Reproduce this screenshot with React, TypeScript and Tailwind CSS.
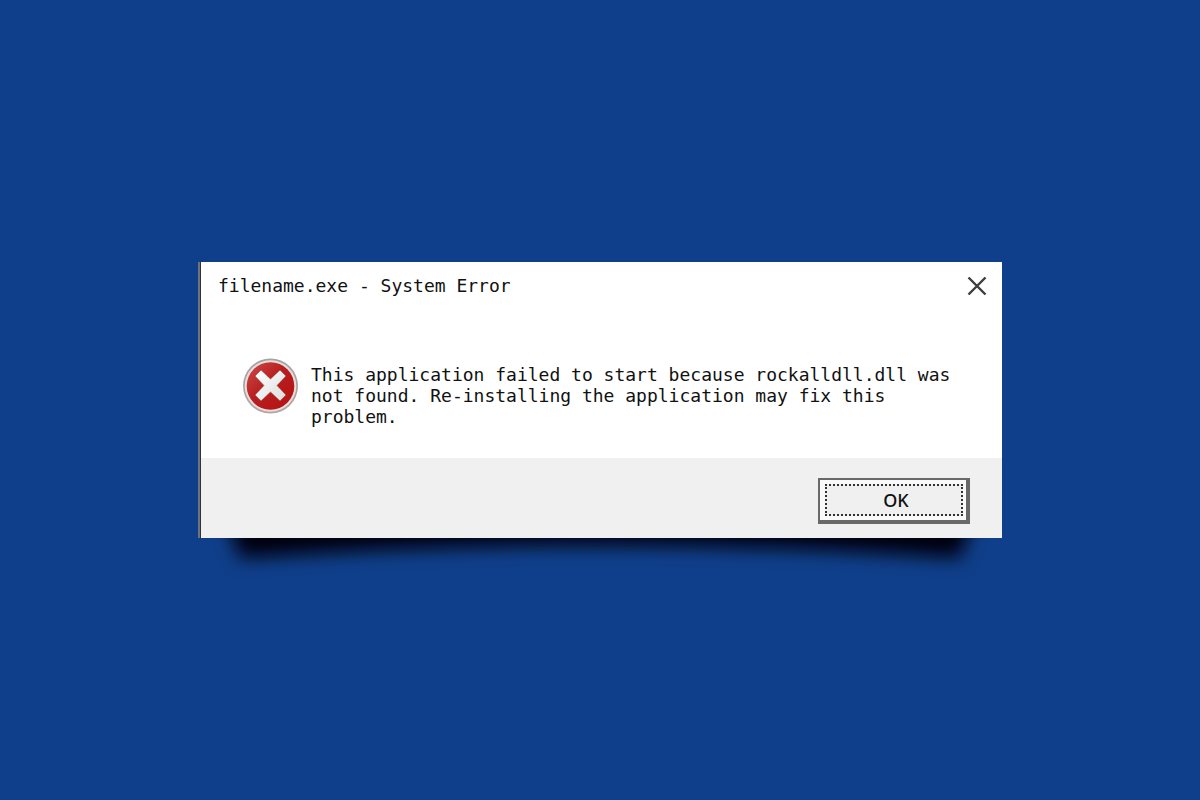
import { useState } from "react";

const ErrorIcon = () => (
  <svg viewBox="0 0 56 56" className="w-14 h-14 shrink-0" aria-hidden="true">
    <defs>
      <linearGradient id="rim" x1="0" y1="0" x2="0" y2="1">
        <stop offset="0" stopColor="#a3a3a3" />
        <stop offset="1" stopColor="#b0a6a6" />
      </linearGradient>
      <linearGradient id="red" x1="0" y1="0" x2="1" y2="1">
        <stop offset="0" stopColor="#cf4a48" />
        <stop offset="0.45" stopColor="#b81f20" />
        <stop offset="1" stopColor="#b5100f" />
      </linearGradient>
      <linearGradient id="cross" x1="0" y1="0" x2="1" y2="1">
        <stop offset="0" stopColor="#ffffff" />
        <stop offset="1" stopColor="#dcdcdc" />
      </linearGradient>
    </defs>
    <circle cx="27.5" cy="28" r="27.5" fill="url(#rim)" />
    <circle cx="27.5" cy="28" r="25.8" fill="#eadedd" />
    <circle cx="27.5" cy="28" r="23.8" fill="url(#red)" />
    <path
      d="M18 12 L27.5 21 L37 12 L43 18 L34 27.5 L43 37 L37 43 L27.5 34 L18 43 L12 37 L21 27.5 L12 18 Z"
      fill="url(#cross)"
      stroke="#8f1515"
      strokeOpacity="0.4"
      strokeWidth="1"
      strokeLinejoin="round"
    />
  </svg>
);

// Shadow under the lower edge, deeper at both ends
const CurvedShadow = () => (
  <svg
    viewBox="0 0 804 80"
    preserveAspectRatio="none"
    className="absolute left-0 top-full -mt-5 w-full h-20"
    aria-hidden="true"
  >
    <defs>
      <filter id="soft" x="-5%" y="-50%" width="110%" height="200%">
        <feGaussianBlur stdDeviation="9" />
      </filter>
    </defs>
    <path
      d="M28 0 H776 L762 40 Q402 14 42 40 Z"
      fill="#000510"
      filter="url(#soft)"
    />
  </svg>
);

const App = () => {
  const [open, setOpen] = useState(true);
  const close = () => setOpen(false);

  return (
    <main className="min-h-screen flex items-center justify-center bg-[#0f3e8a] font-['DejaVu_Sans_Mono',monospace] text-lg text-[#111111]">
      {open && (
        <div className="relative w-[67%]">
          <CurvedShadow />
          <div
            role="alertdialog"
            aria-labelledby="dialog-title"
            aria-describedby="dialog-text"
            className="relative border-l-2 border-[#6b7280] bg-white"
          >
            <div className="border-l border-[#333333]">
              {/* Title bar */}
              <header className="flex items-center justify-between h-12 pl-[17px] pr-[14px]">
                <h1 id="dialog-title">filename.exe - System Error</h1>
                <button type="button" aria-label="Close" onClick={close}>
                  <svg viewBox="0 0 22 22" className="w-[22px] h-[22px]">
                    <path d="M2.5 2.5 L19.5 19.5 M19.5 2.5 L2.5 19.5" stroke="#3d3d3d" strokeWidth="2.4" />
                  </svg>
                </button>
              </header>

              {/* Message */}
              <div className="flex gap-3 pt-12 pb-[31px] pl-[42px] pr-10">
                <ErrorIcon />
                <p id="dialog-text" className="pt-[6px] leading-[21px]">
                  This application failed to start because rockalldll.dll was
                  <br />
                  not found. Re-installing the application may fix this
                  <br />
                  problem.
                </p>
              </div>

              {/* Buttons */}
              <footer className="flex justify-end h-20 pt-5 pr-8 bg-[#f0f0f0]">
                <button
                  type="button"
                  onClick={close}
                  className="w-[152px] h-[46px] py-1 pl-[5px] pr-[3px] border-2 border-r-4 border-b-4 border-[#696969] bg-[#fafafa] font-['Noto_Sans',sans-serif] font-medium"
                >
                  <span className="flex items-center justify-center h-full pl-1 border-2 border-dotted border-[#333333] bg-[#f0f0f0]">
                    OK
                  </span>
                </button>
              </footer>
            </div>
          </div>
        </div>
      )}
    </main>
  );
};

export default App;
